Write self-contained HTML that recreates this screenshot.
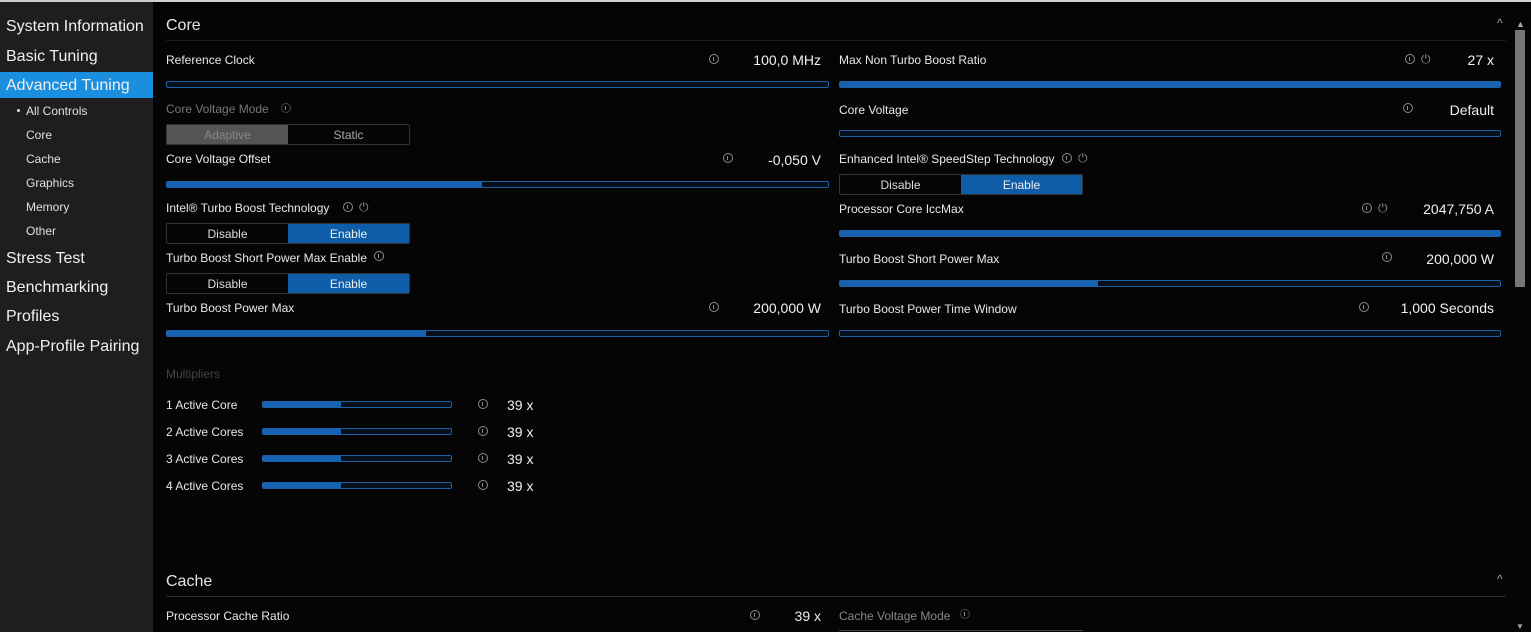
<!DOCTYPE html>
<html><head><meta charset="utf-8"><style>
*{margin:0;padding:0;box-sizing:border-box}
body{width:1531px;height:632px;background:#050505;font-family:"Liberation Sans",sans-serif;color:#e6e6e6;position:relative;overflow:hidden}
.a{position:absolute;white-space:nowrap}
#top{left:0;top:0;width:1531px;height:2px;background:#cfcfcf}
#side{left:0;top:2px;width:153px;height:630px;background:#1e1e1e}
.m{font-size:16px;left:6px;color:#f0f0f0;transform:translateY(2px)}
.s{font-size:12px;left:26px;color:#e0e0e0}
.lab{font-size:12px;color:#e8e8e8;transform:translateY(1px)}
.val{font-size:14px;color:#f0f0f0;text-align:right;transform:translateY(1px)}
.sl{height:7px;border:1px solid #1f5fa3;border-radius:2px;background:#06101c;overflow:hidden}
.sl i{display:block;height:100%;background:#1763b3}
.tg{height:21px;border:1px solid #333;border-radius:2px;display:flex;font-size:12px}
.tg span{flex:1;text-align:center;line-height:20px;color:#ddd}
.tg .on{background:#0f5ca8;color:#eee}
.ic{width:10px;height:10px;border:1.5px solid #8a8a8a;border-radius:50%}
.ic::after{content:"";position:absolute;left:2.5px;top:1.5px;width:1.5px;height:4px;background:#8a8a8a}
.h{font-size:16px;color:#e6e6e6;transform:translateY(2px)}
.ln{height:1px;background:#1c1c1c}
</style></head><body>
<div class="a" id="top"></div>
<div class="a" id="side"></div>
<div class="a" style="left:0;top:72px;width:153px;height:26px;background:#1a8fe0"></div>
<div class="a m" style="top:16px">System Information</div>
<div class="a m" style="top:46px">Basic Tuning</div>
<div class="a m" style="top:75px">Advanced Tuning</div>
<div class="a s" style="top:104px">All Controls</div>
<div class="a" style="left:17px;top:109px;width:3px;height:3px;background:#ddd;border-radius:50%"></div>
<div class="a s" style="top:128px">Core</div>
<div class="a s" style="top:152px">Cache</div>
<div class="a s" style="top:176px">Graphics</div>
<div class="a s" style="top:200px">Memory</div>
<div class="a s" style="top:224px">Other</div>
<div class="a m" style="top:248px">Stress Test</div>
<div class="a m" style="top:277px">Benchmarking</div>
<div class="a m" style="top:306px">Profiles</div>
<div class="a m" style="top:336px">App-Profile Pairing</div>

<div class="a" style="left:1515px;top:30px;width:10px;height:257px;background:#777"></div>
<div class="a" style="left:1516px;top:19px;color:#aaa;font-size:9px">▲</div>
<div class="a" style="left:1516px;top:622px;color:#aaa;font-size:8px">▼</div>

<div class="a h" style="left:166px;top:15px">Core</div>
<div class="a" style="left:1497px;top:16px;color:#aaa;font-size:12px">^</div>
<div class="a ln" style="left:166px;top:40px;width:1340px"></div>

<div class="a lab" style="left:166px;top:52px">Reference Clock</div>
<div class="a ic" style="left:709px;top:54px"></div>
<div class="a val" style="left:720px;top:51px;width:101px">100,0 MHz</div>
<div class="a sl" style="left:166px;top:81px;width:663px"></div>

<div class="a lab" style="left:166px;top:101px;color:#777">Core Voltage Mode</div>
<div class="a ic" style="left:281px;top:103px;border-color:#444"></div>
<div class="a tg" style="left:166px;top:124px;width:244px"><span style="background:#555;color:#888">Adaptive</span><span style="color:#aaa">Static</span></div>

<div class="a lab" style="left:166px;top:151px">Core Voltage Offset</div>
<div class="a ic" style="left:723px;top:153px"></div>
<div class="a val" style="left:720px;top:151px;width:101px">-0,050 V</div>
<div class="a sl" style="left:166px;top:181px;width:663px"><i style="width:315px"></i></div>

<div class="a lab" style="left:166px;top:200px">Intel® Turbo Boost Technology</div>
<div class="a ic" style="left:343px;top:202px"></div>
<div class="a" style="left:359px;top:200px;color:#8a8a8a;font-size:12px">⏻</div>
<div class="a tg" style="left:166px;top:223px;width:244px"><span>Disable</span><span class="on">Enable</span></div>

<div class="a lab" style="left:166px;top:250px">Turbo Boost Short Power Max Enable</div>
<div class="a ic" style="left:374px;top:251px"></div>
<div class="a tg" style="left:166px;top:273px;width:244px"><span>Disable</span><span class="on">Enable</span></div>

<div class="a lab" style="left:166px;top:300px">Turbo Boost Power Max</div>
<div class="a ic" style="left:709px;top:302px"></div>
<div class="a val" style="left:720px;top:299px;width:101px">200,000 W</div>
<div class="a sl" style="left:166px;top:330px;width:663px"><i style="width:259px"></i></div>

<div class="a lab" style="left:839px;top:52px">Max Non Turbo Boost Ratio</div>
<div class="a ic" style="left:1405px;top:54px"></div>
<div class="a" style="left:1421px;top:52px;color:#8a8a8a;font-size:12px">⏻</div>
<div class="a val" style="left:1400px;top:51px;width:94px">27 x</div>
<div class="a sl" style="left:839px;top:81px;width:662px"><i style="width:100%"></i></div>

<div class="a lab" style="left:839px;top:102px">Core Voltage</div>
<div class="a ic" style="left:1403px;top:103px"></div>
<div class="a val" style="left:1400px;top:101px;width:94px">Default</div>
<div class="a sl" style="left:839px;top:130px;width:662px"></div>

<div class="a lab" style="left:839px;top:151px">Enhanced Intel® SpeedStep Technology</div>
<div class="a ic" style="left:1062px;top:153px"></div>
<div class="a" style="left:1078px;top:151px;color:#8a8a8a;font-size:12px">⏻</div>
<div class="a tg" style="left:839px;top:174px;width:244px"><span>Disable</span><span class="on">Enable</span></div>

<div class="a lab" style="left:839px;top:201px">Processor Core IccMax</div>
<div class="a ic" style="left:1362px;top:203px"></div>
<div class="a" style="left:1378px;top:201px;color:#8a8a8a;font-size:12px">⏻</div>
<div class="a val" style="left:1400px;top:200px;width:94px">2047,750 A</div>
<div class="a sl" style="left:839px;top:230px;width:662px"><i style="width:100%"></i></div>

<div class="a lab" style="left:839px;top:251px">Turbo Boost Short Power Max</div>
<div class="a ic" style="left:1382px;top:252px"></div>
<div class="a val" style="left:1400px;top:250px;width:94px">200,000 W</div>
<div class="a sl" style="left:839px;top:280px;width:662px"><i style="width:258px"></i></div>

<div class="a lab" style="left:839px;top:301px">Turbo Boost Power Time Window</div>
<div class="a ic" style="left:1359px;top:302px"></div>
<div class="a val" style="left:1380px;top:299px;width:114px">1,000 Seconds</div>
<div class="a sl" style="left:839px;top:330px;width:662px"></div>

<div class="a lab" style="left:166px;top:366px;color:#444">Multipliers</div>
<div class="a lab" style="left:166px;top:397px">1 Active Core</div>
<div class="a lab" style="left:166px;top:424px">2 Active Cores</div>
<div class="a lab" style="left:166px;top:451px">3 Active Cores</div>
<div class="a lab" style="left:166px;top:478px">4 Active Cores</div>
<div class="a sl" style="left:262px;top:401px;width:190px"><i style="width:78px"></i></div>
<div class="a sl" style="left:262px;top:428px;width:190px"><i style="width:78px"></i></div>
<div class="a sl" style="left:262px;top:455px;width:190px"><i style="width:78px"></i></div>
<div class="a sl" style="left:262px;top:482px;width:190px"><i style="width:78px"></i></div>
<div class="a ic" style="left:478px;top:399px"></div>
<div class="a ic" style="left:478px;top:426px"></div>
<div class="a ic" style="left:478px;top:453px"></div>
<div class="a ic" style="left:478px;top:480px"></div>
<div class="a val" style="left:507px;top:396px">39 x</div>
<div class="a val" style="left:507px;top:423px">39 x</div>
<div class="a val" style="left:507px;top:450px">39 x</div>
<div class="a val" style="left:507px;top:477px">39 x</div>

<div class="a h" style="left:166px;top:571px">Cache</div>
<div class="a" style="left:1497px;top:572px;color:#aaa;font-size:12px">^</div>
<div class="a ln" style="left:166px;top:596px;width:1340px;background:#2a2a2a"></div>
<div class="a lab" style="left:166px;top:608px">Processor Cache Ratio</div>
<div class="a ic" style="left:750px;top:610px"></div>
<div class="a val" style="left:780px;top:607px;width:41px">39 x</div>
<div class="a lab" style="left:839px;top:608px;color:#888">Cache Voltage Mode</div>
<div class="a ic" style="left:960px;top:609px;border-color:#444"></div>
<div class="a" style="left:839px;top:630px;width:244px;height:2px;border-top:1px solid #444"></div>
</body></html>
